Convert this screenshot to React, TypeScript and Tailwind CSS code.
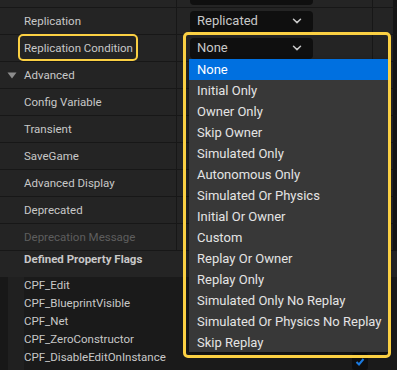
import { ReactNode } from "react"

const options = [
  "None",
  "Initial Only",
  "Owner Only",
  "Skip Owner",
  "Simulated Only",
  "Autonomous Only",
  "Simulated Or Physics",
  "Initial Or Owner",
  "Custom",
  "Replay Or Owner",
  "Replay Only",
  "Simulated Only No Replay",
  "Simulated Or Physics No Replay",
  "Skip Replay",
]

const flags = [
  "CPF_Edit",
  "CPF_BlueprintVisible",
  "CPF_Net",
  "CPF_ZeroConstructor",
  "CPF_DisableEditOnInstance",
]

function Chevron() {
  return (
    <svg width="10" height="6" viewBox="0 0 10 6" className="shrink-0">
      <path d="M1.5 1.2 L5 4.6 L8.5 1.2" fill="none" stroke="#c8c8c8" strokeWidth="1.5" strokeLinecap="round" strokeLinejoin="round" />
    </svg>
  )
}

function Combo({ label }: { label: string }) {
  return (
    <div className="flex items-center justify-between w-[123px] h-[21px] rounded-[4px] bg-[#0f0f0f] pl-[7px] pr-[11px] text-[13px] text-[#c8c8c8]">
      <span>{label}</span>
      <Chevron />
    </div>
  )
}

function Row({ name, value, muted, icon }: { name: string; value?: ReactNode; muted?: boolean; icon?: ReactNode }) {
  return (
    <div className="flex h-[27px] border-b border-[#171717] bg-[#242424]">
      <div className="flex items-center w-[177px] border-r border-[#171717] pl-[7px] pt-px">
        <div className="w-[17px] flex items-center">{icon}</div>
        <span className={`text-[11.5px] ${muted ? "text-[#5e5e5e]" : "text-[#c8c8c8]"}`}>{name}</span>
      </div>
      <div className="flex items-center w-[196px] border-r border-[#171717] pl-[13px]">{value}</div>
      <div className="w-[20px]" />
      <div className="w-[4px] bg-[#151515]" />
    </div>
  )
}

export default function App() {
  return (
    <div className="relative w-[397px] h-[370px] overflow-hidden bg-[#1c1c1c]" style={{ fontFamily: "Roboto, 'Noto Sans', sans-serif" }}>
      {/* partial row on top */}
      <div className="flex h-[8px] border-b border-[#171717] bg-[#242424] overflow-hidden">
        <div className="w-[177px] border-r border-[#171717]" />
        <div className="flex items-end w-[196px] border-r border-[#171717] pl-[13px] pb-[2px]">
          <div className="w-[123px] h-[16px] rounded-[4px] bg-[#0f0f0f]" />
        </div>
        <div className="w-[20px]" />
        <div className="w-[4px] bg-[#151515]" />
      </div>

      <Row name="Replication" value={<Combo label="Replicated" />} />
      <Row name="Replication Condition" value={<Combo label="None" />} />
      <Row
        name="Advanced"
        icon={
          <svg width="10" height="7" viewBox="0 0 10 7">
            <path d="M0.5 0.5 H9.5 L5 6.5 Z" fill="#8c8c8c" />
          </svg>
        }
      />
      <Row name="Config Variable" />
      <Row name="Transient" />
      <Row name="SaveGame" />
      <Row name="Advanced Display" />
      <Row name="Deprecated" />
      <Row name="Deprecation Message" muted />

      {/* flags header */}
      <div className="flex h-[26px] bg-[#242424]">
        <div className="pl-[24px] pt-[1px] leading-[14px] text-[11.5px] font-bold text-[#c8c8c8]">Defined Property Flags</div>
      </div>

      {/* flags list */}
      <div className="flex h-[93px] bg-[#1a1a1a]">
        <div className="w-[8px] bg-[#181818]" />
        <div className="w-[16px] bg-[#202020]" />
        <div className="flex-1 flex flex-col -mt-px">
          {flags.map((f) => (
            <div key={f} className="h-[18px] leading-[18px] text-[11.5px] text-[#c8c8c8]">
              {f}
            </div>
          ))}
        </div>
        <div className="flex flex-col pt-[76px] pr-[29px]">
          <div className="w-[16px] h-[18px] rounded-[3px] bg-[#0f0f0f] flex justify-center pt-[4px]">
            <svg width="10" height="10" viewBox="0 0 10 10">
              <path d="M1.5 5 L4 7.5 L8.5 2" fill="none" stroke="#1a7ae0" strokeWidth="2" />
            </svg>
          </div>
        </div>
      </div>

      {/* dropdown menu */}
      <div className="absolute left-[189px] top-[59px] w-[199px] h-[293px] bg-[#383838] shadow-[0_2px_4px_rgba(0,0,0,0.5)]">
        {options.map((o, i) => (
          <div
            key={o}
            className={`h-[21px] flex items-center pl-[8px] text-[13px] ${i === 0 ? "bg-[#0070e0] text-white" : "text-[#e4e4e4]"}`}
          >
            {o}
          </div>
        ))}
      </div>

      {/* highlights */}
      <div className="absolute left-[18px] top-[34px] w-[120px] h-[27px] rounded-[5px] border-[2.5px] border-[#fbd043]" />
      <div className="absolute left-[183px] top-[32px] w-[208px] h-[326px] rounded-[5px] border-[3px] border-[#fbd043]" />
    </div>
  )
}
